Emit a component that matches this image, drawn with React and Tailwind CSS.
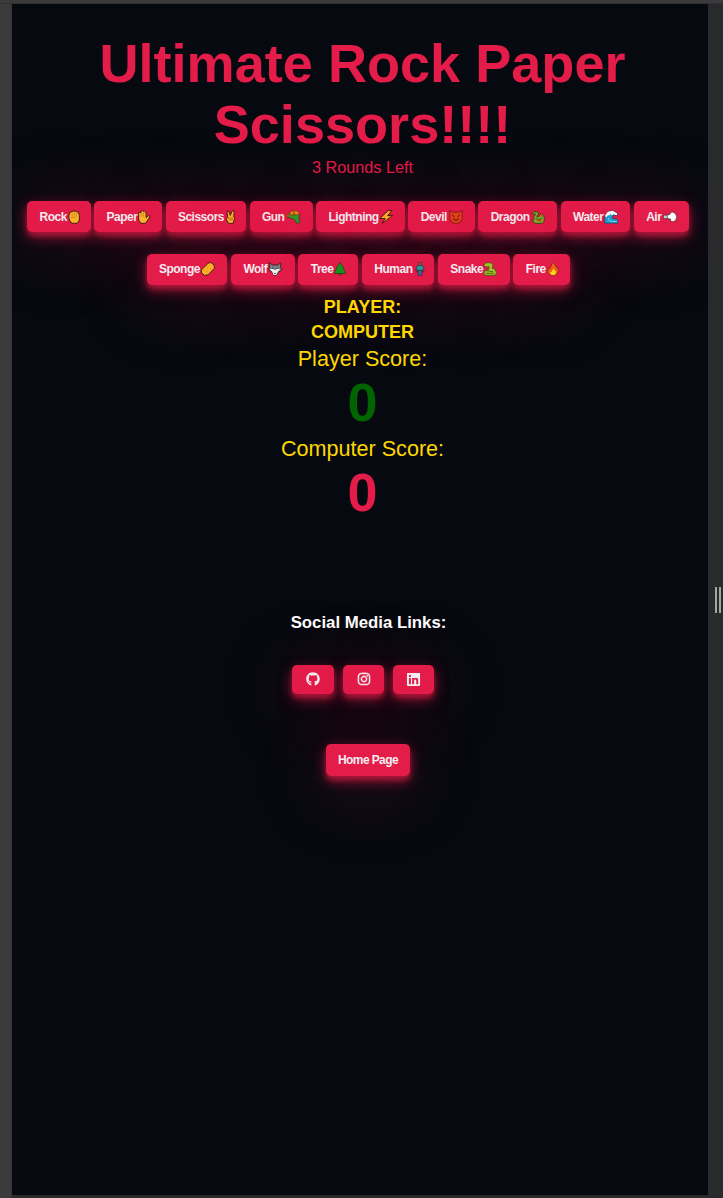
import React from "react";
import { FaGithub, FaInstagram, FaLinkedin } from "react-icons/fa";

const GLOW =
  "bg-[#e31c49] rounded-[5px] shadow-[0_5px_14px_rgba(225,29,72,0.6),0_4px_5px_rgba(225,29,72,0.5),0_8px_80px_rgba(225,29,72,0.3)]";

const line = { stroke: "#2a160c", strokeWidth: 0.8, strokeLinejoin: "round", strokeLinecap: "round" };

const art = {
  fist: (
    <g {...line}>
      <path fill="#fbb62c" d="M2 4.5 2.5 2.2 4.5 1.6l2-.8 2 .6 2.2.8L11.5 5v4.3l-2 3H4.5L2.7 10 1.7 7Z" />
      <path fill="none" stroke="#b86f14" strokeWidth=".5" d="M4.8 3v3M7 2.5v3.3M9 3v3M4 7h4" />
    </g>
  ),
  hand: (
    <g {...line}>
      <path fill="#fbb62c" d="M1.5 8V3l1-1 1 .6.5-1.6 1.2-.4.8.6.8-.4 1 .8.7 1.5V7l2-1.7 1.8.4L9.6 10 7.8 12.4H3.6L2 10Z" />
      <path fill="none" stroke="#b86f14" strokeWidth=".5" d="M4 3v3M6.2 2v4" />
    </g>
  ),
  victory: (
    <g {...line}>
      <path fill="#fbb62c" d="M3.3 6 2.8 1.5 4.5 1 5.8 5 7.8.6l1.8.6L9 6l.9 2-1.6 4.5H4.3L2.3 9Z" />
      <path fill="none" stroke="#7a430c" strokeWidth=".5" d="M4 7.5h4M5 9h3" />
    </g>
  ),
  gun: (
    <g strokeLinejoin="round">
      <path fill="#2f9e28" stroke="#1c4215" strokeWidth=".6" d="M.5 4.5 3 3h8.5l1 2-.5 3 1 3.5-3 1L7.6 8.5 4.5 8 3 7H1Z" />
      <path fill="#f58a1f" stroke="#5a2c0a" strokeWidth=".5" d="m3.5 1.8 4-1.3 3 .5 2 2.5-1.7 1H3.5Z" />
      <path fill="#e2431d" d="M.4 4.2h2.8v2H.4z" />
      <path fill="none" stroke="#5a2c0a" strokeWidth=".7" d="M7.5.7v3.8" />
    </g>
  ),
  bolt: <path {...line} fill="#fbb62c" d="M8.5.6.8 7.8l5 .2L3 12.5 12.6 5 8 5.3 11.6.8Z" />,
  devil: (
    <g {...line}>
      <path fill="#e2431d" stroke="#6d180b" d="M.6.6 3.5 2h6L12.4.6l-.3 3.9.4 2.8-1.7 3.8-2.8 1.4H5L2.2 11.1.5 7.3.9 4.5Z" strokeWidth=".7" />
      <path fill="none" stroke="#350d09" d="m3.3 5 1.4 1M9.7 5 8.3 6M4 8.5q2.5 2.5 5 0" />
    </g>
  ),
  dragon: (
    <g {...line} stroke="#263d14">
      <path fill="#7cab2a" strokeWidth=".7" d="M1 3.2 3 1.2l3 .5 1.2 2L5.3 6 7 6.4l2.5-3 2.2 1.4.8 3.4-.6 3-1.6 1.3H4L1.3 10.4 3 8.2 2.2 6.5 4 4.4Z" />
      <path fill="#d55720" stroke="none" d="M8 6 9.7 3.8l1.7 2zM4.8 10.2l2.6-1.6 2.8.8-1 1.6z" />
      <path fill="none" strokeWidth=".6" d="m4.8 8 3 1.2L10 7.7M3.4 2.8h.3" />
    </g>
  ),
  wave: (
    <g strokeLinejoin="round">
      <path fill="#16a4d6" stroke="#17455c" d="M.7 12.3V6l3-4.6L8.5.7l4 2.6-.4 2L9.6 4.6l-1.8.8.2 2.5 4.7.8v3.6Z" strokeWidth=".6" />
      <path fill="#fff" d="m1 5 2.6-3.3L8 .8l4.3 2.5-.5 1.6L9 4 7 5.2l-.6-1.7-1.7 1.7-1.2-.4L2 7Z" />
      <path fill="none" stroke="#7fd6ee" strokeWidth=".9" d="M4 7.5 5 10l3 .7h4" />
    </g>
  ),
  air: (
    <g strokeLinejoin="round" stroke="#3d2a30" strokeWidth=".6">
      <path fill="#c9ced2" d="M.4 4.8h5v3.2h-5z" />
      <path fill="#fff" d="M4 4.7 6.5 4 7 2.4l2.2-.5 2.6 1.8 1 2.8-1.1 3L9.4 11 7 10.2 7 8.3 4 8Z" />
    </g>
  ),
  sponge: (
    <g {...line}>
      <path fill="#fbb42b" d="M.5 7.2 6.6 1.2 9 .5l3 2 .5 3.2L6.5 12l-3.2.4L.7 10.3Z" />
      <path stroke="#d88313" d="M3.6 8h.1M6 5.5h.1M8.3 3.6h.1M9 6h.1M6 9h.1" />
    </g>
  ),
  wolf: (
    <g {...line}>
      <path fill="#78848c" d="m1.2.8 3 2h4.6l3-2v4.5l1 2.2-3 1.5-2 3.4H5.5L3.5 9l-3-1.5 1-2.5Z" strokeWidth=".7" />
      <path fill="#f4f6f7" stroke="none" d="m1.6 7 3.2-.8L6.5 8l1.7-1.8 3.2.8-2.3 2-1.3 3H5.2L4 9z" />
      <path stroke="#161b20" d="M4.2 5.7 5 6M9 5.7 8.2 6M6.1 10.6h.8" />
    </g>
  ),
  tree: (
    <g strokeLinejoin="round">
      <path fill="#8e501f" stroke="#3b2410" strokeWidth=".5" d="M5.6 10.4h1.8v2.2H5.6z" />
      <path fill="#12961f" stroke="#113d13" d="m6.5.4 2.6 3.8 1.6 4 1 2.5H1.3l1-2.5 1.6-4Z" strokeWidth=".6" />
    </g>
  ),
  human: (
    <g stroke="#2a2024" strokeWidth=".5" strokeLinejoin="round">
      <path fill="#9c6339" d="M5.2.5h2.6v2.8H5.2zM3 6h1.4v3H3zM8.6 6H10v3H8.6z" />
      <path fill="#1aa6a4" d="M4 3.3h5l1 2.9L8.4 8H4.6L3 6.2Z" />
      <path fill="#36699a" d="M4.6 7.6h3.8v4.9H4.6z" />
    </g>
  ),
  snake: (
    <g {...line} stroke="#384f12">
      <path fill="#a5c52a" strokeWidth=".7" d="m.8 2.7 2-2h4.6l2 1.8-.9 3.2 2.6 1 1.4 3-1 2.7H2L.7 10.2 2.3 8 5 7.3l.7-2.8H2Z" />
      <path fill="none" strokeWidth=".7" d="M4 8.2 9 9M3 10.5h7" />
    </g>
  ),
  fire: (
    <g>
      <path fill="#f26411" stroke="#7d250a" strokeWidth=".6" strokeLinejoin="round" d="M6 .4 8.3 2.4 9.5 5l.9-.6 1.2 4-1.3 2.8-2.5 1.3H5L2.6 11.2 1.6 8.6l.9-3 1.1.7L4.8 4Z" />
      <path fill="#ffd22d" d="m6.8 6 2.5 3-.7 2.6-2 .7-2.3-.9L3.8 9l1.4.5z" />
    </g>
  ),
};

function Pic({ name }) {
  return (
    <svg viewBox="0 0 13 13" className="h-[14px] w-[14px] shrink-0">
      {art[name]}
    </svg>
  );
}

const rowOne = [
  ["Rock", "fist", "w-[63.4px]"],
  ["Paper", "hand", "w-[67.7px]"],
  ["Scissors", "victory", "w-[80.3px]"],
  ["Gun", "gun", "w-[62.9px]"],
  ["Lightning", "bolt", "w-[88.5px]"],
  ["Devil", "devil", "w-[66.3px]"],
  ["Dragon", "dragon", "w-[78.7px]"],
  ["Water", "wave", "w-[69.4px]"],
  ["Air", "air", "w-[55px]"],
];

const rowTwo = [
  ["Sponge", "sponge", "w-[80.7px]"],
  ["Wolf", "wolf", "w-[63.6px]"],
  ["Tree", "tree", "w-[59.8px]"],
  ["Human", "human", "w-[72.2px]"],
  ["Snake", "snake", "w-[71.6px]"],
  ["Fire", "fire", "w-[56.2px]"],
];

function Choices({ items }) {
  return items.map(([label, pic, width]) => (
    <button
      key={label}
      className={
        "flex h-[31.3px] shrink-0 items-center justify-between pl-[12.3px] pr-[12.2px] text-[12px] font-bold tracking-[-0.5px] text-[#f4eef2] " +
        GLOW + " " + width
      }
    >
      <span>{label}</span>
      <Pic name={pic} />
    </button>
  ));
}

export default function App() {
  return (
    <div className="flex h-[1198px] w-[723px] flex-col overflow-hidden bg-[#292a2b] font-['Liberation_Sans',Arial,sans-serif]">
      <div className="h-1 shrink-0 border-b border-[#303030] bg-[#3b3b3b]" />
      <div className="flex h-[1194px]">
        <div className="w-3 shrink-0 border-r border-[#333] bg-[#3b3b3b]" />
        <main className="flex h-[1191px] w-[696px] shrink-0 flex-col overflow-hidden bg-[#060910]">
          <header className="mt-[29px] pl-[5px] text-center text-[#e31c49]">
            <h1 className="text-[54.1px] font-bold leading-[61px]">
              <span className="block whitespace-nowrap">Ultimate Rock Paper</span>
              <span className="block">Scissors!!!!</span>
            </h1>
            <p className="-mt-px text-[16.2px] leading-[26px]">3 Rounds Left</p>
          </header>
          <div className="mt-[21px] flex gap-[3.7px] pl-[15.2px]">
            <Choices items={rowOne} />
          </div>
          <div className="mt-[21.5px] flex gap-[3.8px] pl-[134.6px]">
            <Choices items={rowTwo} />
          </div>
          <section className="mt-[9.5px] pl-[5px] text-center text-[#ffd700]">
            <h3 className="text-[18px] font-bold leading-[25px]">PLAYER:</h3>
            <h3 className="text-[18px] font-bold leading-[25px]">COMPUTER</h3>
            <p className="mt-px text-[21.6px] leading-[26px]">Player Score:</p>
            <p className="text-[54px] font-bold leading-[61px] text-[#006400]">0</p>
            <p className="mt-[3px] text-[21.6px] leading-[26px]">Computer Score:</p>
            <p className="mb-[2px] text-[54px] font-bold leading-[61px] text-[#e31c49]">0</p>
          </section>
          <footer className="mt-[86px] flex flex-col text-[#f4eef2]">
            <h3 className="pl-[17px] text-center text-[16.8px] font-bold leading-[24px] text-white">Social Media Links:</h3>
            <div className="mt-[30px] flex gap-[9px] pl-[280px] text-[14px]">
              <button aria-label="GitHub" className={"flex h-[29px] w-[42px] items-center justify-center " + GLOW}>
                <FaGithub />
              </button>
              <button aria-label="Instagram" className={"flex h-[29px] w-[41px] items-center justify-center " + GLOW}>
                <FaInstagram className="stroke-current [stroke-width:16]" />
              </button>
              <button aria-label="LinkedIn" className={"flex h-[29px] w-[41px] items-center justify-center text-[15px] " + GLOW}>
                <FaLinkedin />
              </button>
            </div>
            <button
              className={"ml-[314px] mt-[50.5px] flex h-[31.5px] w-[84px] items-center justify-center text-[12px] font-bold tracking-[-0.6px] " + GLOW}
            >
              Home Page
            </button>
          </footer>
        </main>
        <div className="flex w-[15px] shrink-0 items-center justify-end gap-[2px] pb-[2px] pr-[2px]">
          <span className="h-[26px] w-[2px] bg-[#a5a5a5]" />
          <span className="h-[26px] w-[2px] bg-[#a5a5a5]" />
        </div>
      </div>
    </div>
  );
}
